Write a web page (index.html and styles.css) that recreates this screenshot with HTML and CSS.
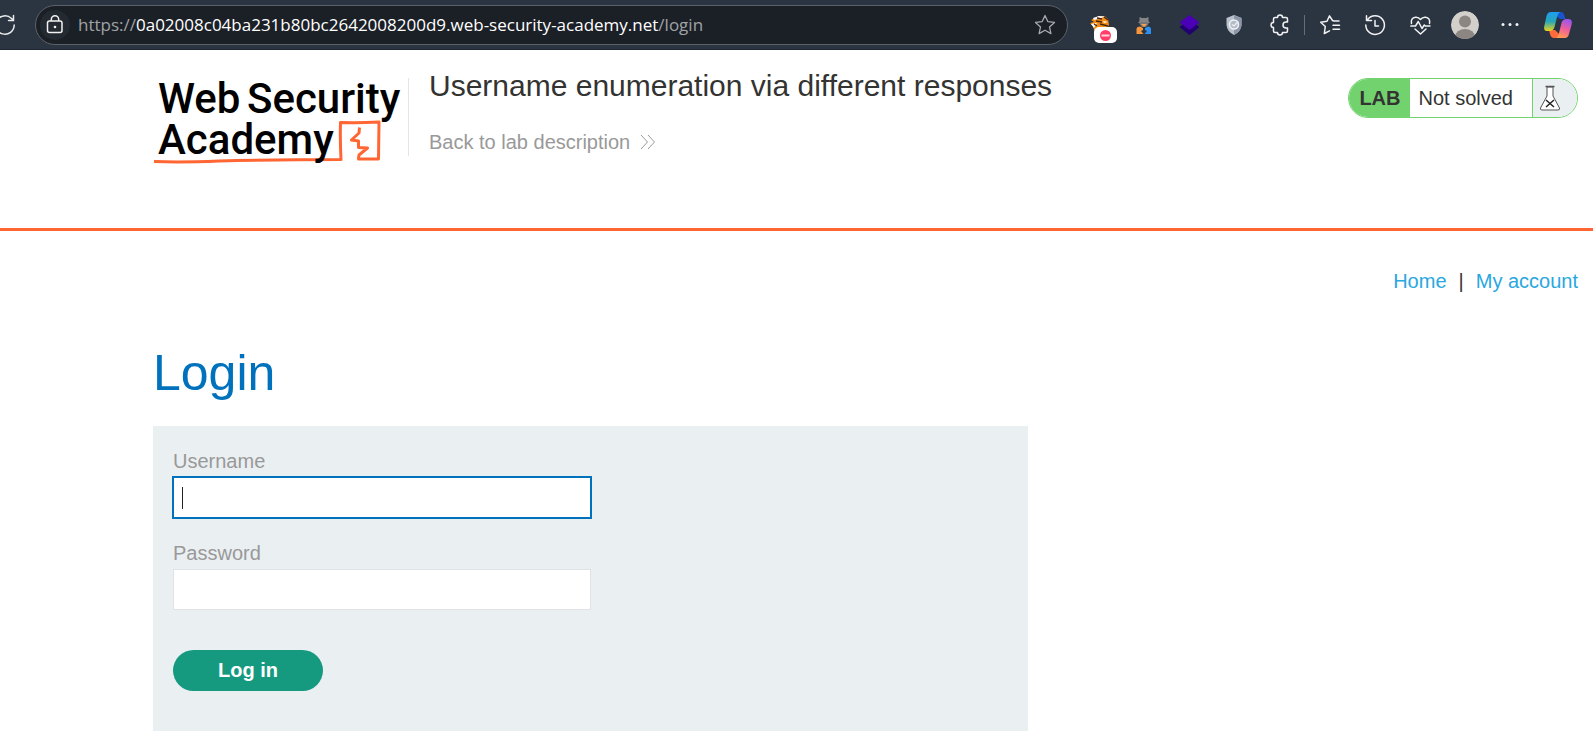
FILE: index.html
```html
<!DOCTYPE html>
<html lang="en">
<head>
<meta charset="utf-8">
<title>Username enumeration via different responses</title>
<link rel="stylesheet" href="styles.css">
</head>
<body>
<div class="toolbar">
  <button class="reload" aria-label="Refresh"><svg width="16" height="50" viewBox="0 0 16 50" fill="none" stroke="#e9eaec" stroke-width="1.5" stroke-linecap="round"><path d="M14.200 25A9.200 9.200 0 1 1 11.500 18.500L13.300 20.300M13.500 15.500V20.500H8.500"/></svg></button>
  <div class="address">
    <button class="lock" aria-label="Site information"><svg width="30" height="30" viewBox="0 0 30 30" fill="none" stroke="#f2f2f2" stroke-width="1.500"><rect x="7.500" y="11" width="14.500" height="11.500" rx="2"/><path d="M11.300 11V9.500A3.700 3.700 0 0 1 18.700 9.500V11"/><circle cx="15" cy="17" r="1.300" fill="#f2f2f2" stroke="none"/></svg></button>
    <div class="url">https://<span class="host">0a02008c04ba231b80bc2642008200d9.web-security-academy.net</span>/login</div>
    <button class="favourite" aria-label="Add to favourites"><svg width="24" height="24" viewBox="0 0 24 24" fill="none" stroke="#a6a8aa" stroke-width="1.300" stroke-linejoin="round"><path d="M12 2.500L14.800 8.600L21.500 9.400L16.500 13.900L17.900 20.600L12 17.300L6.100 20.600L7.500 13.900L2.500 9.400L9.200 8.600Z"/></svg></button>
  </div>
  <div class="tools">
    <button aria-label="Request blocker"><svg width="45" height="50" viewBox="0 0 45 50"><path d="M13 23L17 22L14 20L18 18L22 16L28 16.500L31 19L32 25L29 30H17L16 26Z" fill="#f28c16"/><path d="M16 18L22 16L28 16.500L24 18L17 20ZM14 24L20 23L17 28ZM26 21L31 22L27 23Z" fill="#fff"/><path d="M20 18L25 19M27 17L31 20M19 21L25 22M23 24L31 26M17 24L20 26" stroke="#442414" stroke-width="1.300"/><rect x="17" y="27" width="23" height="16" rx="5" fill="#fff"/><circle cx="28.500" cy="35.500" r="5.500" fill="#ff3d68"/><path d="M24.500 35.500H32.500" stroke="#ffd7de" stroke-width="2"/></svg></button>
    <button aria-label="Account switcher"><svg width="45" height="50" viewBox="0 0 45 50"><path d="M17.500 17L20 18H24L26.500 17V21L28 23H16L17.500 21Z" fill="#858585"/><path d="M17.500 22H26.500V24L24 27H20L17.500 24Z" fill="#777"/><path d="M19 24H25L22 27Z" fill="#f3a14a"/><path d="M14.500 34V28.500Q15 26.500 18 26.500L21 28V30L19 31L21.500 34Z" fill="#f7953a"/><path d="M29 34V28.500Q28.500 26.500 26 26.500L23 28V30L25 31L22.500 34Z" fill="#2e8fee"/></svg></button>
    <button aria-label="Layers"><svg width="45" height="50" viewBox="0 0 45 50"><path d="M12.500 27L22.500 20L32.500 27L22.500 35Z" fill="#20006e"/><path d="M12.500 22.500L22.500 15L32.500 22.500L22.500 30Z" fill="#4b00b5"/></svg></button>
    <button aria-label="Privacy shield"><svg width="45" height="50" viewBox="0 0 45 50"><path d="M22 15L29.500 18V25Q29 31.500 22 35Q15 31.500 14.500 25V18Z" fill="#b9c1ce"/><path d="M22 15L29.500 18V25Q29 31.500 22 35Z" fill="#8d96a8"/><circle cx="22" cy="24.500" r="4.500" fill="#b4bcc7" stroke="#f0f2f5" stroke-width="1.500"/><path d="M20 24.500L22 26L26 21.500" fill="none" stroke="#eef0f4" stroke-width="1.200"/></svg></button>
    <button aria-label="Extensions"><svg width="45" height="50" viewBox="0 0 45 50" fill="none" stroke="#f2f2f2" stroke-width="1.500" stroke-linejoin="round"><path d="M18 17.500H20.500A2.500 2.500 0 0 1 25.500 17.500H29Q30.500 17.500 30.500 19V22H29A2.800 2.800 0 0 0 29 28H30.500V31Q30.500 32.500 29 32.500H25.500A2.500 2.500 0 0 1 20.500 32.500H18Q16.500 32.500 16.500 31V27.500A2.500 2.500 0 0 1 16.500 22.500V19Q16.500 17.500 18 17.500Z"/></svg></button>
    <span class="divider"></span>
    <button aria-label="Favourites"><svg width="45" height="50" viewBox="0 0 45 50" fill="none" stroke="#f2f2f2" stroke-width="1.500" stroke-linejoin="round" stroke-linecap="round"><path d="M31 21H26L24.500 20.500L21.500 15.800L19 21.300L12.700 22.200L17.300 26.500L16.300 33.500L21.500 30.800M25 25.300H31.500M25 29.300H31.500"/></svg></button>
    <button aria-label="History"><svg width="45" height="50" viewBox="0 0 45 50" fill="none" stroke="#f2f2f2" stroke-width="1.500" stroke-linecap="round" stroke-linejoin="round"><path d="M12.800 25A9.300 9.300 0 1 0 14.500 19.700M13.500 15.800V20.500H18.500M22 20.500V26H25.500"/></svg></button>
    <button aria-label="Browser essentials"><svg width="45" height="50" viewBox="0 0 45 50" fill="none" stroke="#f2f2f2" stroke-width="1.500" stroke-linejoin="round" stroke-linecap="round"><path d="M13.500 23.500Q12.500 18 17.500 17.300Q20.500 17 22.500 19.500Q24.500 17 27.500 17.300Q32.500 18 31.500 23.500M12.800 26H17.500L20.300 21.500L24 28.500L26.300 25L27.300 26H32M17 29L22.500 34L28 29"/></svg></button>
    <button aria-label="Profile"><svg width="45" height="50" viewBox="0 0 45 50"><defs><clipPath id="face"><circle cx="22" cy="25" r="14"/></clipPath></defs><g clip-path="url(#face)"><circle cx="22" cy="25" r="14" fill="#d3d0cc"/><circle cx="22" cy="21.500" r="6" fill="#8b8682"/><ellipse cx="22" cy="37" rx="10" ry="8" fill="#8b8682"/></g></svg></button>
    <button aria-label="Settings and more"><svg width="45" height="50" viewBox="0 0 45 50" fill="#f2f2f2"><circle cx="15" cy="24.500" r="1.500"/><circle cx="22" cy="24.500" r="1.500"/><circle cx="29" cy="24.500" r="1.500"/></svg></button>
    <button aria-label="Copilot"><svg width="49" height="50" viewBox="0 0 49 50"><defs><linearGradient id="c1" x1="0" y1="0" x2="0" y2="1"><stop offset="0" stop-color="#1f9cf0"/><stop offset=".5" stop-color="#27a7b8"/><stop offset="1" stop-color="#e9d51c"/></linearGradient><linearGradient id="c2" x1=".6" y1="0" x2=".3" y2="1"><stop offset="0" stop-color="#9c55ee"/><stop offset=".5" stop-color="#ef5e9b"/><stop offset="1" stop-color="#ff9c50"/></linearGradient></defs><path d="M19 12H28Q30.500 12 31.500 16L32.500 19H27L23 16Z" fill="#1754d2"/><path d="M30 38H21Q18 38 17 34L16 30H22L26 34Z" fill="#ff6b3b"/><path d="M18 12H27Q25 13 24 17L21.500 27Q20.500 31 16 31H14Q10 31 11.500 25L13.500 16Q14.500 12 18 12Z" fill="url(#c1)"/><path d="M32 38H23.500Q25 37 26 33L28.500 23Q29.500 19 34 19H35.500Q40 19 38.500 25L36 34Q35 38 32 38Z" fill="url(#c2)"/></svg></button>
  </div>
</div>

<header class="lab-header">
  <a class="logo" href="#" aria-label="Web Security Academy">
    <svg width="255" height="94" viewBox="0 0 255 94">
      <path d="M1 86.500Q28 87.500 66 86Q128 84.500 188 84.500Q187 66 187.500 47.500Q207 48 226 47L225.500 84L205.500 84L206 80L214.500 73L205.500 72.500V66L198.500 65L206 58L206.500 52.500" fill="none" stroke="#ff6633" stroke-width="3" stroke-linejoin="round"/>
      <g class="logo-text"><text x="5" y="38">Web</text><text x="94" y="38">Security</text><text x="5" y="79">Academy</text></g>
    </svg>
  </a>
  <div class="title-block">
    <h2>Username enumeration via different responses</h2>
    <a class="back" href="#">Back to lab description <svg width="16" height="16" viewBox="0 0 16 16" fill="none" stroke="#999" stroke-width="1"><path d="M1 1L7.500 8L1 15M8 1L14.500 8L8 15"/></svg></a>
  </div>
  <div class="lab-status">
    <span class="lab-tag">LAB</span>
    <span class="lab-state">Not solved</span>
    <span class="lab-flask"><svg width="22" height="26" viewBox="0 0 22 26" fill="none" stroke="#555" stroke-width="1"><path d="M8 2V11L1.500 23Q1 25 3 25H19Q21 25 20.500 23L14 11V2Z" fill="#fff"/><path d="M6.500 1.500H15.500" stroke-width="1.500"/><path d="M7 15L15 22M15 15L7 22" stroke="#222" stroke-width="1.500"/></svg></span>
  </div>
</header>

<main>
  <nav class="links"><a href="#">Home</a><span>|</span><a href="#">My account</a></nav>
  <h1>Login</h1>
  <form class="login">
    <label for="username">Username</label>
    <input class="focused" id="username" type="text">
    <label for="password">Password</label>
    <input id="password" type="password">
    <button type="button">Log in</button>
  </form>
</main>
</body>
</html>
```
FILE: styles.css
```css
* { box-sizing: border-box; }
body { margin: 0; background: #fff; color: #333332; font: 20px/24px "Liberation Sans", Arial, sans-serif; }
a { text-decoration: none; }
svg { display: block; }
button { border: 0; padding: 0; background: none; font: inherit; }

.toolbar { display: flex; align-items: center; height: 50px; padding-right: 11px; background: #2b3441; border-bottom: 1px solid #20262f; }
.reload { margin-right: 19px; }
.address { display: flex; align-items: center; flex: 1; min-width: 0; height: 40px; margin-right: 9px; padding: 0 10px 0 4px; border: 1px solid #5d626a; border-radius: 20px; background: #1b2027; }
.lock { border-radius: 50%; background: #242a32; }
.url { flex: 1; min-width: 0; margin-left: 8px; overflow: hidden; color: #a0a3a6; font: 17px/28px "Open Sans", "Noto Sans", sans-serif; white-space: nowrap; }
.host { color: #fff; }
.tools { display: flex; align-items: center; }
.divider { width: 1px; height: 20px; margin: 0 3px 0 2px; background: #666d77; }

.lab-header { display: flex; align-items: flex-start; padding: 20px 15px 71px 153px; border-bottom: 3px solid #ff6633; }
.logo { height: 87px; padding-top: 5px; }
.logo svg { overflow: visible; }
.logo-text { font: 500 42px Roboto, sans-serif; fill: #000; }
.title-block { flex: 1; height: 78px; margin-top: 8px; padding-left: 20px; border-left: 1px solid #e5e5e5; }
h2 { margin: -10px 0 0; font-size: 30px; line-height: 36px; font-weight: 400; }
.back { display: inline-flex; align-items: center; gap: 10px; margin-top: 26px; color: #999; }
.lab-status { display: flex; height: 40px; margin-top: 8px; overflow: hidden; border: 1px solid #72d36e; border-radius: 20px; line-height: 38px; }
.lab-tag { padding: 0 9px 0 10px; background: #72d36e; font-weight: 700; }
.lab-state { padding: 0 19px 0 9px; }
.lab-flask { display: flex; align-items: center; padding: 0 16px 0 6px; border-left: 1px solid #72d36e; background: #eaeff2; }

main { padding: 38px 15px 6px 153px; }
.links { display: flex; justify-content: flex-end; gap: 12px; }
.links a { color: #29a7df; }
h1 { margin: 52px 0 24px; color: #0071bc; font-size: 50px; font-weight: 400; line-height: 57px; }
.login { display: flex; flex-direction: column; align-items: flex-start; max-width: 875px; padding: 23px 20px 40px; background: #eaeff2; }
.login label { margin-bottom: 4px; color: #999; }
.login input { width: 418px; max-width: 100%; height: 41px; margin-bottom: 23px; padding: 0 8px; border: 1px solid #e0e3e5; background: #fff; font: inherit; }
.login .focused { border-color: #0071bc; outline: 1px solid #0071bc; background: linear-gradient(#222, #222) 8px center / 1px 22px no-repeat #fff; }
.login button { width: 150px; height: 41px; margin-top: 17px; padding-bottom: 2px; border-radius: 21px; background: #159a80; color: #fff; font-weight: 700; }
```
